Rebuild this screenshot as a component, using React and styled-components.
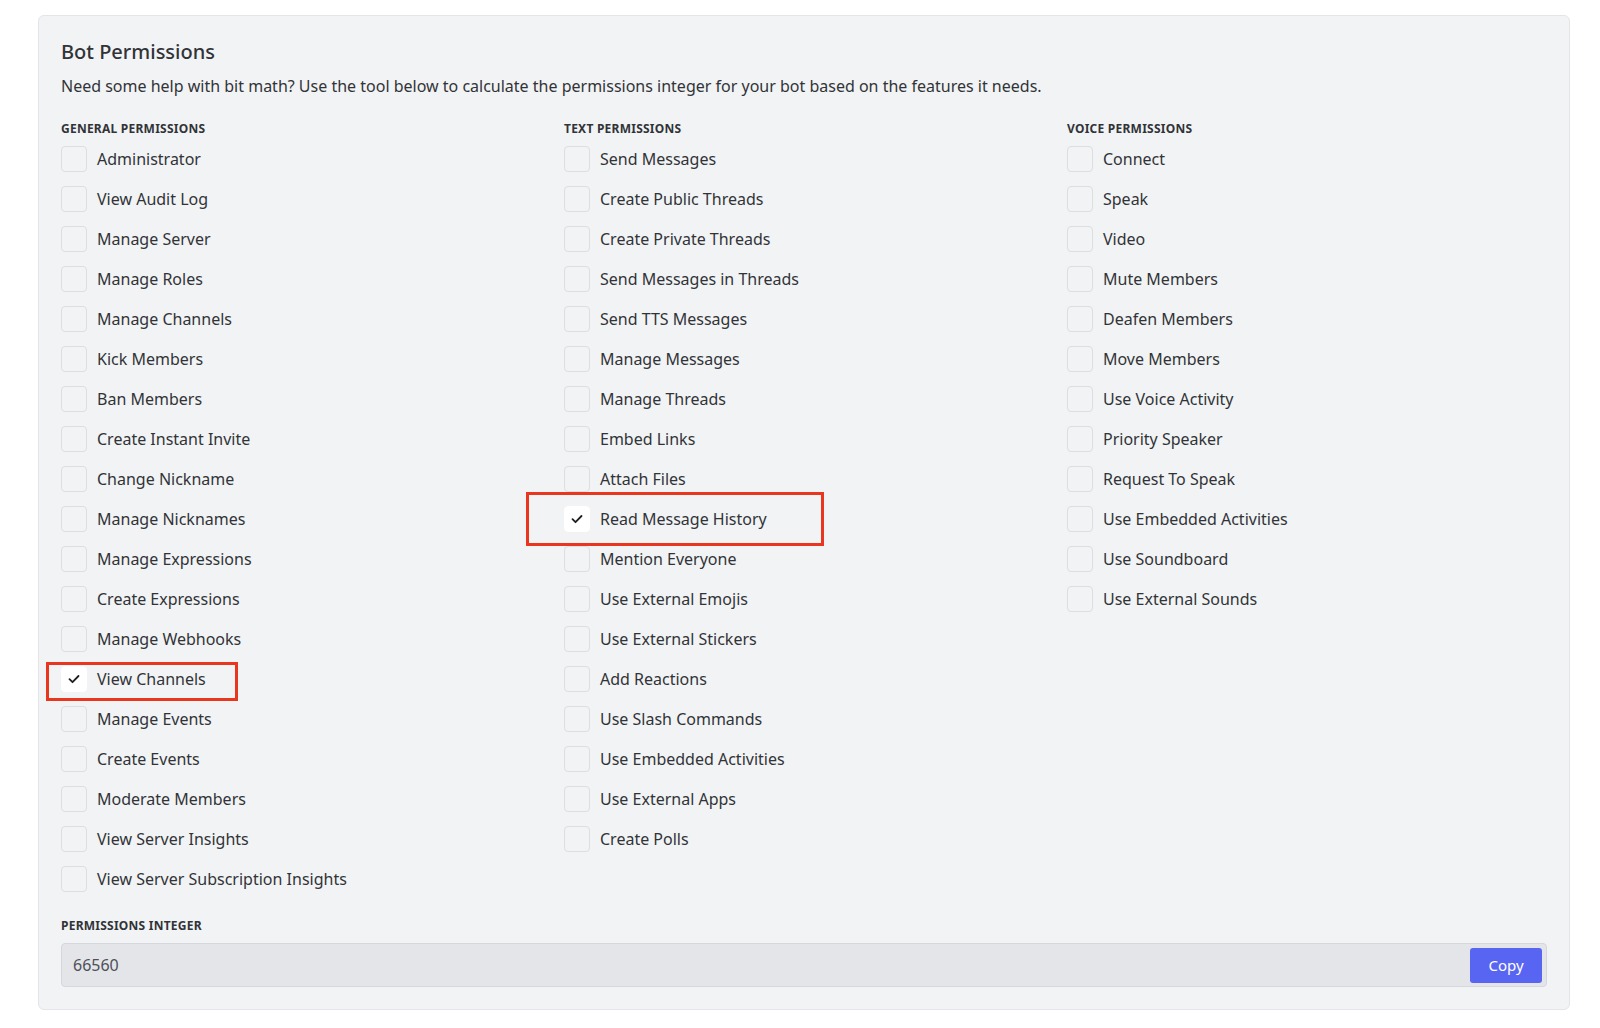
import React from "react";
import styled, { createGlobalStyle } from "styled-components";

const GlobalStyle = createGlobalStyle`
  body {
    margin: 0;
    background: #ffffff;
    font-family: "Noto Sans", "Open Sans", sans-serif;
    color: #313338;
  }
`;

const Page = styled.div`
  padding: 15px 30px 19px 38px;
`;

const Panel = styled.section`
  box-sizing: border-box;
  width: 1532px;
  background: #f2f3f5;
  border: 1px solid #e3e5e8;
  border-radius: 6px;
  padding: 24px 22px 22px 22px;
`;

const Title = styled.h2`
  margin: 0;
  font-size: 20px;
  line-height: 24px;
  font-weight: 500;
  color: #313338;
`;

const Description = styled.p`
  margin: 12px 0 0;
  font-size: 16px;
  line-height: 20px;
  color: #313338;
`;

const Columns = styled.div`
  display: grid;
  grid-template-columns: repeat(3, 480px);
  column-gap: 23px;
  margin-top: 25px;
`;

const Column = styled.div`
  display: flex;
  flex-direction: column;
`;

const SectionLabel = styled.div`
  font-size: 12px;
  line-height: 16px;
  font-weight: 700;
  letter-spacing: 0.02em;
  text-transform: uppercase;
  color: #313338;
  margin-bottom: 9px;
`;

const List = styled.div`
  display: flex;
  flex-direction: column;
  gap: 14px;
`;

const Row = styled.label`
  position: relative;
  display: flex;
  align-items: center;
  gap: 10px;
  height: 26px;
  font-size: 16px;
  color: #313338;
`;

const Box = styled.span`
  box-sizing: border-box;
  width: 26px;
  height: 26px;
  flex: none;
  display: flex;
  align-items: center;
  justify-content: center;
  border-radius: 4px;
  border: 1px solid ${(p) => (p.$checked ? "#ffffff" : "#dcdee2")};
  background: ${(p) => (p.$checked ? "#ffffff" : "transparent")};
`;

const Highlight = styled.span`
  position: absolute;
  top: ${(p) => p.$top}px;
  bottom: ${(p) => p.$bottom}px;
  left: ${(p) => p.$left}px;
  width: ${(p) => p.$width}px;
  border: 3px solid #e8361f;
  box-sizing: border-box;
  pointer-events: none;
`;

const IntegerLabel = styled(SectionLabel)`
  margin-top: 26px;
  margin-bottom: 9px;
`;

const IntegerField = styled.div`
  box-sizing: border-box;
  height: 44px;
  display: flex;
  align-items: center;
  justify-content: space-between;
  background: #e3e5e8;
  border: 1px solid #d4d7dc;
  border-radius: 4px;
  padding: 0 4px 0 11px;
  font-size: 16px;
  color: #4e5058;
`;

const CopyButton = styled.button`
  width: 72px;
  height: 35px;
  border: none;
  border-radius: 3px;
  background: #5865f2;
  color: #ffffff;
  font-family: "Noto Sans", "Open Sans", sans-serif;
  font-size: 15px;
  font-weight: 400;
  cursor: pointer;
`;

const general = [
  "Administrator", "View Audit Log", "Manage Server", "Manage Roles", "Manage Channels",
  "Kick Members", "Ban Members", "Create Instant Invite", "Change Nickname", "Manage Nicknames",
  "Manage Expressions", "Create Expressions", "Manage Webhooks", "View Channels", "Manage Events",
  "Create Events", "Moderate Members", "View Server Insights", "View Server Subscription Insights",
];

const text = [
  "Send Messages", "Create Public Threads", "Create Private Threads", "Send Messages in Threads",
  "Send TTS Messages", "Manage Messages", "Manage Threads", "Embed Links", "Attach Files",
  "Read Message History", "Mention Everyone", "Use External Emojis", "Use External Stickers",
  "Add Reactions", "Use Slash Commands", "Use Embedded Activities", "Use External Apps", "Create Polls",
];

const voice = [
  "Connect", "Speak", "Video", "Mute Members", "Deafen Members", "Move Members", "Use Voice Activity",
  "Priority Speaker", "Request To Speak", "Use Embedded Activities", "Use Soundboard", "Use External Sounds",
];

const checked = ["View Channels", "Read Message History"];

// red annotation frames drawn over two of the rows
const highlights = {
  "View Channels": { top: -4, bottom: -9, left: -15, width: 192 },
  "Read Message History": { top: -14, bottom: -14, left: -38, width: 298 },
};

function Check() {
  return (
    <svg width="14" height="14" viewBox="0 0 14 14" fill="none">
      <path d="M2.5 7.2l3 3 6-6.2" stroke="#1e1f22" strokeWidth="1.8" strokeLinecap="round" strokeLinejoin="round" />
    </svg>
  );
}

function Section({ title, items }) {
  return (
    <Column>
      <SectionLabel>{title}</SectionLabel>
      <List>
        {items.map((name) => {
          const on = checked.includes(name);
          const hl = highlights[name];
          return (
            <Row key={name}>
              <Box $checked={on}>{on && <Check />}</Box>
              {name}
              {hl && <Highlight $top={hl.top} $bottom={hl.bottom} $left={hl.left} $width={hl.width} />}
            </Row>
          );
        })}
      </List>
    </Column>
  );
}

export default function App() {
  return (
    <Page>
      <GlobalStyle />
      <Panel>
        <Title>Bot Permissions</Title>
        <Description>
          Need some help with bit math? Use the tool below to calculate the permissions integer for your bot based on the features it needs.
        </Description>
        <Columns>
          <Section title="General Permissions" items={general} />
          <Section title="Text Permissions" items={text} />
          <Section title="Voice Permissions" items={voice} />
        </Columns>
        <IntegerLabel>Permissions Integer</IntegerLabel>
        <IntegerField>
          66560
          <CopyButton>Copy</CopyButton>
        </IntegerField>
      </Panel>
    </Page>
  );
}
